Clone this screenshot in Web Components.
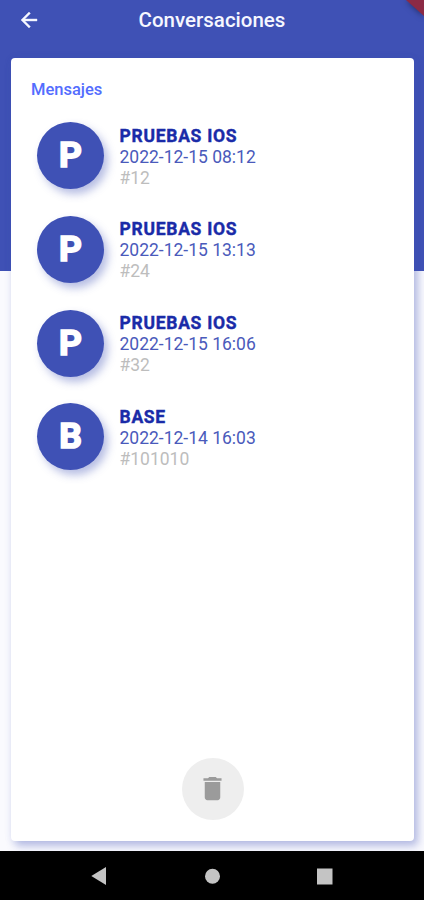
<!DOCTYPE html>
<html lang="es">
<head>
<meta charset="UTF-8">
<meta name="viewport" content="width=device-width, initial-scale=1.0">
<title>Conversaciones</title>
<style>
  body {
    margin: 0;
    font-family: Roboto, "Liberation Sans", sans-serif;
  }
</style>
</head>
<body>
<app-screen>
  <app-header slot="header">Conversaciones</app-header>
  <message-card titulo="Mensajes"></message-card>
  <nav-bar slot="nav"></nav-bar>
</app-screen>

<script>
class AppScreen extends HTMLElement {
  constructor() {
    super();
    this.attachShadow({ mode: "open" });

    this.shadowRoot.innerHTML = `
      <style>
        :host {
          display: flex;
          flex-direction: column;
          position: relative;
          height: 900px;
          overflow: hidden;
          background: linear-gradient(#3f51b5 271px, #fafafe 271px);
        }

        main {
          flex: 1;
          min-height: 0;
          display: flex;
          padding: 18.3px 10.5px 10.5px 11px;
        }

        ::slotted(message-card) {
          flex: 1;
        }

        /* Cinta de la esquina */
        .ribbon {
          width: 18px;
          height: 16px;
          background: #8c2a45;
          clip-path: polygon(0 0, 100% 0, 100% 100%);
        }

        .ribbon-shadow {
          position: absolute;
          top: 0;
          right: 0;
          filter: drop-shadow(0 0 3px rgba(0, 0, 0, 0.5));
        }
      </style>

      <slot name="header"></slot>
      <main><slot></slot></main>
      <slot name="nav"></slot>
      <div class="ribbon-shadow"><div class="ribbon"></div></div>
    `;
  }
}

class AppHeader extends HTMLElement {
  constructor() {
    super();
    this.attachShadow({ mode: "open" });

    this.shadowRoot.innerHTML = `
      <style>
        :host {
          display: grid;
          grid-template-columns: 60px 1fr 60px;
          align-items: center;
          height: 40px;
          color: #f6f7ff;
        }

        svg {
          width: 24px;
          height: 24px;
          margin: -1px 0 0 17px;
          fill: currentColor;
          stroke: currentColor;
          stroke-width: 0.4;
        }

        .title {
          text-align: center;
          font-size: 20.5px;
          font-weight: 500;
        }
      </style>

      <svg viewBox="0 0 24 24"><path d="M20 11H7.83l5.59-5.59L12 4l-8 8 8 8 1.41-1.41L7.83 13H20v-2z"/></svg>
      <span class="title"><slot></slot></span>
    `;
  }
}

class MessageCard extends HTMLElement {
  constructor() {
    super();
    this.attachShadow({ mode: "open" });

    this.shadowRoot.innerHTML = `
      <style>
        :host {
          display: flex;
          flex-direction: column;
          box-sizing: border-box;
          padding: 20.7px 19.5px 20.7px 20px;
          background: #fff;
          border-radius: 4px;
          box-shadow: 4px 5px 8px rgba(63, 81, 181, 0.36), 0 0 8px rgba(63, 81, 181, 0.07);
        }

        .heading {
          margin-bottom: 21px;
          font-size: 16.5px;
          line-height: 22px;
          font-weight: 500;
          color: #536dfe;
        }

        #lista {
          flex: 1;
          display: flex;
          flex-direction: column;
          gap: 26.8px;
          padding-left: 6px;
        }

        .delete {
          align-self: center;
          display: flex;
          align-items: center;
          justify-content: center;
          width: 62px;
          height: 62px;
          border: 0;
          padding: 0;
          border-radius: 50%;
          background: #eee;
        }

        .delete svg {
          width: 31px;
          height: 31px;
          fill: #9b9b9b;
        }
      </style>

      <div class="heading"></div>
      <div id="lista"></div>
      <button class="delete" aria-label="Eliminar">
        <svg viewBox="0 0 24 24"><path d="M6 19c0 1.1.9 2 2 2h8c1.1 0 2-.9 2-2V7H6v12zM19 4h-3.500l-1-1h-5l-1 1H5v2h14V4z"/></svg>
      </button>
    `;
  }

  connectedCallback() {
    const mensajes = [
      { nombre: "PRUEBAS IOS", fecha: "2022-12-15 08:12", numero: "#12" },
      { nombre: "PRUEBAS IOS", fecha: "2022-12-15 13:13", numero: "#24" },
      { nombre: "PRUEBAS IOS", fecha: "2022-12-15 16:06", numero: "#32" },
      { nombre: "BASE", fecha: "2022-12-14 16:03", numero: "#101010" }
    ];

    this.shadowRoot.querySelector(".heading").textContent = this.getAttribute("titulo");
    const lista = this.shadowRoot.querySelector("#lista");

    /* Generar filas */
    mensajes.forEach((m) => {
      const row = document.createElement("message-row");
      row.innerHTML = `
        <span slot="inicial">${m.nombre[0]}</span>
        <span slot="nombre">${m.nombre}</span>
        <span slot="fecha">${m.fecha}</span>
        <span slot="numero">${m.numero}</span>
      `;
      lista.appendChild(row);
    });
  }
}

class MessageRow extends HTMLElement {
  constructor() {
    super();
    this.attachShadow({ mode: "open" });

    this.shadowRoot.innerHTML = `
      <style>
        :host {
          display: flex;
          align-items: center;
          height: 67px;
          gap: 15.5px;
        }

        .avatar {
          display: flex;
          align-items: center;
          justify-content: center;
          box-sizing: border-box;
          flex: none;
          width: 67px;
          height: 67px;
          padding-bottom: 1px;
          border-radius: 50%;
          background: #3f51b5;
          box-shadow: 4px 5px 9px rgba(63, 81, 181, 0.38);
          color: #fff;
          font-size: 35.5px;
          line-height: 40px;
          font-weight: 700;
          -webkit-text-stroke: 1.7px #fff;
        }

        .info {
          padding-top: 3.2px;
          font-size: 17.5px;
          line-height: 21px;
          white-space: nowrap;
        }

        .nombre {
          font-weight: 700;
          letter-spacing: 0.72px;
          -webkit-text-stroke: 0.4px #1a2ba8;
          color: #1a2ba8;
        }

        .fecha {
          color: #4a5abb;
        }

        .numero {
          color: #bdbdbd;
        }
      </style>

      <div class="avatar"><slot name="inicial"></slot></div>
      <div class="info">
        <div class="nombre"><slot name="nombre"></slot></div>
        <div class="fecha"><slot name="fecha"></slot></div>
        <div class="numero"><slot name="numero"></slot></div>
      </div>
    `;
  }
}

class NavBar extends HTMLElement {
  constructor() {
    super();
    this.attachShadow({ mode: "open" });

    this.shadowRoot.innerHTML = `
      <style>
        :host {
          display: flex;
          justify-content: center;
          align-items: center;
          gap: 96.5px;
          height: 49px;
          background: #000;
        }

        svg {
          width: 16px;
          height: 18px;
          fill: #c4c4c4;
          overflow: visible;
        }
      </style>

      <svg viewBox="0 0 16 18"><path d="M-0.700 9L14 0v18z"/></svg>
      <svg viewBox="0 0 16 18"><circle cx="8.500" cy="9.300" r="7.500"/></svg>
      <svg viewBox="0 0 16 18"><rect x="0" y="1.500" width="15.500" height="16"/></svg>
    `;
  }
}

customElements.define("app-screen", AppScreen);
customElements.define("app-header", AppHeader);
customElements.define("message-card", MessageCard);
customElements.define("message-row", MessageRow);
customElements.define("nav-bar", NavBar);
</script>
</body>
</html>
